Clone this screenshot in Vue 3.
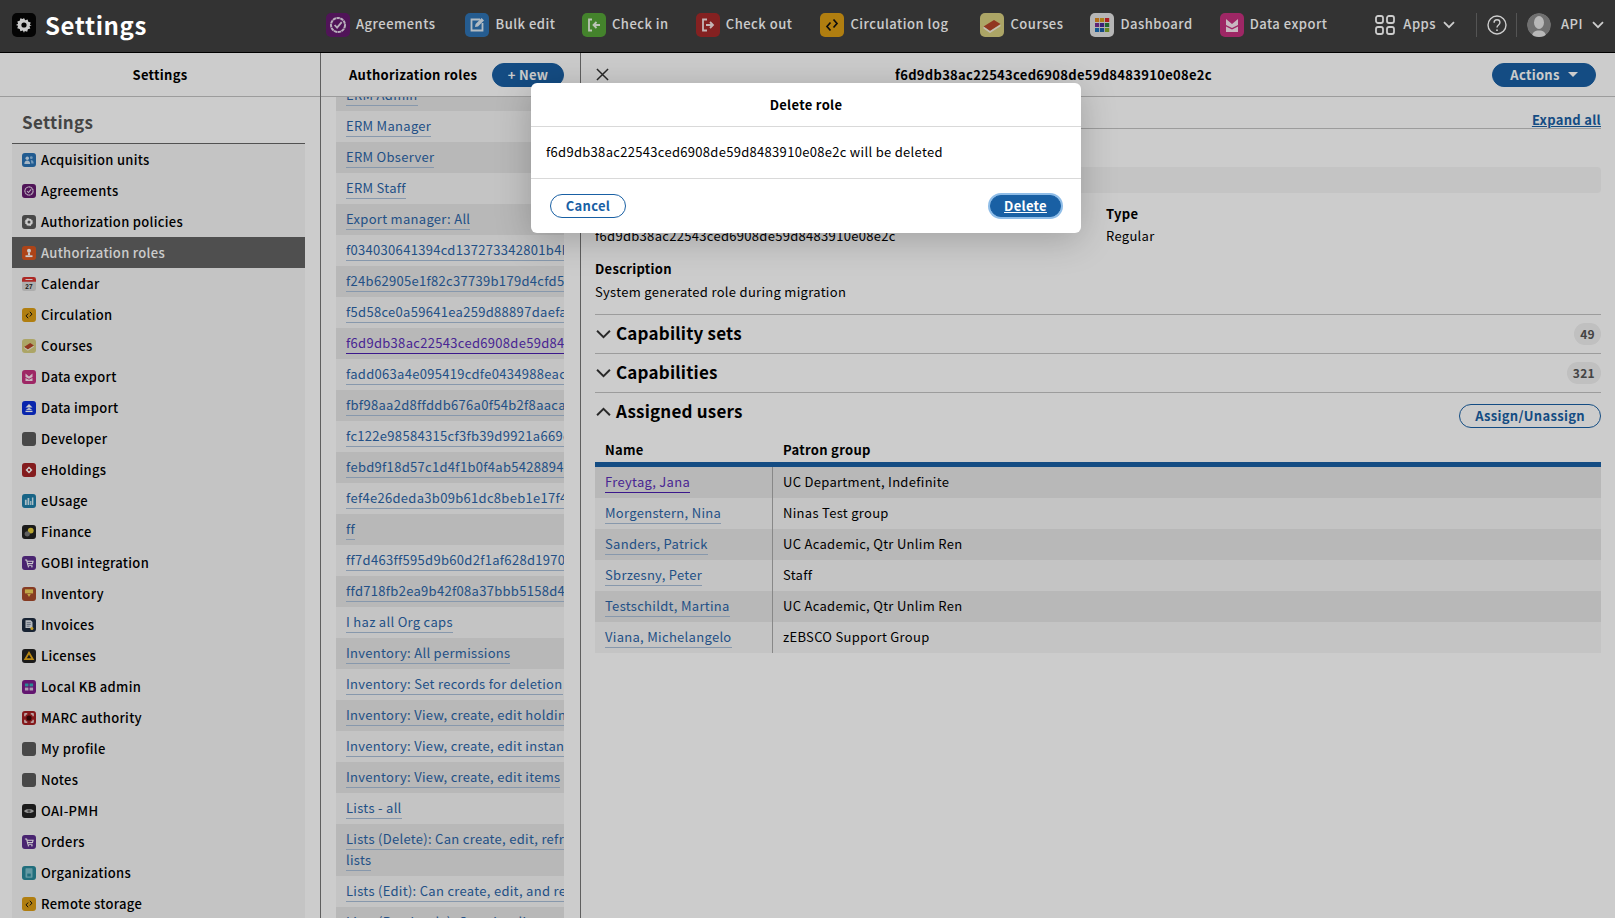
<script setup>
const g = (c) => `<path d="M12 5l1.2 2.2 2.4-.8.7 2.4 2.4.7-.8 2.4L19.7 12l-2.2 1.2.8 2.4-2.4.7-.7 2.4-2.4-.8L12 19.7l-1.2-2.2-2.4.8-.7-2.4-2.4-.7.8-2.4L3.9 12l2.2-1.2-.8-2.4 2.4-.7.7-2.4 2.4.8z" fill="${c}"/>`
const bg = (c) => `<rect width="24" height="24" rx="5" fill="${c}"/>`
const cart = `<path d="M5 7h3l2 9h8M9 9h10l-1 4H10" fill="none" stroke="#fff" stroke-width="1.8"/><circle cx="11" cy="18.5" r="1.4" fill="#fff"/><circle cx="17" cy="18.5" r="1.4" fill="#fff"/>`
const circ = `<path d="M10.500 9.500L7 13.500l3.500 4M13.500 6.500l3.500 4-3.500 4" fill="none" stroke="#111" stroke-width="1.7"/>`
const icons = {
  logo: bg('#050505') + g('#fff') + '<circle cx="12" cy="12" r="2.6" fill="#050505"/>',
  acq: bg('#2a72b5') + '<circle cx="9" cy="9" r="3" fill="#cfe3f5"/><path d="M4 19c0-4 2-6 5-6s5 2 5 6z" fill="#cfe3f5"/><circle cx="16" cy="8" r="2.4" fill="#8fbfe8"/><path d="M15 12c3 0 5 2 5 6h-4z" fill="#8fbfe8"/>',
  agreements: bg('#641a6e') + '<circle cx="12" cy="12" r="7" fill="none" stroke="#e8dcec" stroke-width="2" stroke-dasharray="3.4 .5"/><path d="M8.6 12l2.5 2.6 4.6-5.4" fill="none" stroke="#e8dcec" stroke-width="1.8"/>',
  authpol: bg('#5a5a5a') + g('#fff') + '<circle cx="12" cy="12" r="2.6" fill="#5a5a5a"/>',
  authroles: bg('#d9561f') + '<circle cx="12" cy="8" r="3.4" fill="#fff"/><path d="M10.6 11h2.8l.6 5H10z" fill="#fff"/><rect x="6" y="16" width="12" height="3" fill="#fff"/>',
  calendar: '<rect width="24" height="24" rx="4" fill="#d9d9d9"/><path d="M0 8V4a4 4 0 014-4h16a4 4 0 014 4v4z" fill="#d9342f"/><rect x="6" y="3.5" width="12" height="1.6" fill="#fff"/><text x="12" y="20" font-size="11" font-weight="700" text-anchor="middle" fill="#222" font-family="Liberation Sans, sans-serif">27</text>',
  circulation: bg('#dd9e14') + circ,
  courses: bg('#d8cf80') + '<path d="M3.500 13.500L14 7l6.500 4L10 18z" fill="#b6452a"/><path d="M3.500 13.500L10 18l10.500-6.500v1.800L10 20l-6.500-4.500z" fill="#f4eee0"/>',
  dashboard: '<rect width="24" height="24" rx="5" fill="#e4e4e4"/><rect x="5" y="5" width="4.2" height="4" fill="#e08a1e"/><rect x="10" y="5" width="4.2" height="4" fill="#d9a020"/><rect x="15" y="5" width="4.2" height="4" fill="#d8262c"/><rect x="5" y="10" width="4.2" height="4" fill="#7a2c92"/><rect x="10" y="10" width="4.2" height="4" fill="#4b2a96"/><rect x="15" y="10" width="4.2" height="4" fill="#2b7f3a"/><rect x="5" y="15" width="4.2" height="4" fill="#1b6fb8"/><rect x="10" y="15" width="4.2" height="4" fill="#1c5ea8"/><rect x="15" y="15" width="4.2" height="4" fill="#86ab2a"/>',
  dataexport: bg('#c6317f') + '<path d="M6 6l6 5 6-5v6l-6 3-6-3z" fill="#fbe6f1"/><path d="M6 13.500l6 3 6-3V19H6z" fill="#fbe6f1"/>',
  dataimport: bg('#0b2fd9') + '<path d="M12 5l6 6H6z" fill="#fff"/><path d="M12 11l6 5H6z" fill="#dfe6ff"/><rect x="6" y="17" width="12" height="2" fill="#fff"/>',
  default: bg('#5a5a5a'),
  eholdings: bg('#a62326') + '<path d="M12 6l6 6-6 6-6-6z" fill="#fff"/><circle cx="12" cy="12" r="2" fill="#a62326"/>',
  eusage: bg('#1e7ea8') + '<path d="M5 19v-9h3v9zM9.500 19V7h3v12zM14 19v-7h2v7zM17 19V6h2.500v13z" fill="#d6edf6"/>',
  finance: bg('#222') + '<circle cx="15" cy="9.500" r="5" fill="#e6cf3c"/><circle cx="9" cy="15" r="4.500" fill="#777"/>',
  cart: bg('#5c2e8c') + cart,
  inventory: bg('#a84a2c') + '<path d="M5 4h14v7H5z" fill="#f2d25a"/><path d="M9 12h6l-3 5z" fill="#f2d25a"/>',
  invoices: bg('#1f2c40') + '<path d="M6 4h9l3 3v10H6z" fill="#e4e8ee"/><path d="M8 8h7M8 11h7M8 14h5" stroke="#55637a" stroke-width="1.2"/><circle cx="17" cy="18" r="2.6" fill="#f2c230"/>',
  licenses: bg('#222') + '<path d="M12 6.500l6.500 11h-13z" fill="none" stroke="#e6a817" stroke-width="3"/>',
  localkb: bg('#7c1b8c') + '<rect x="5" y="6" width="6" height="5" fill="#34b0b8"/><rect x="13" y="6" width="6" height="5" fill="#34b0b8"/><rect x="5" y="13" width="6" height="5" fill="#d8c2e0"/><rect x="13" y="13" width="6" height="5" fill="#d8c2e0"/>',
  marc: bg('#a61f22') + '<path d="M4 4h5v2H6v3H4zM15 4h5v5h-2V6h-3zM4 15h2v3h3v2H4zM18 15h2v5h-5v-2h3z" fill="#fff"/><circle cx="12" cy="12" r="4.400" fill="#3e0808"/>',
  oai: bg('#222') + '<path d="M3.500 12c3-4.600 14-4.600 17 0-3 4.600-14 4.600-17 0z" fill="#bbb"/><circle cx="12" cy="12" r="2.800" fill="#666"/>',
  orgs: bg('#2a8a9c') + '<rect x="6" y="4" width="12" height="16" rx="1" fill="#7cc0cc"/><rect x="9" y="13" width="6" height="5" fill="#2a8a9c"/>',
  bulk: bg('#2f74b4') + '<path d="M15 6.500H6.500v11h11V10" fill="none" stroke="#dfeaf4" stroke-width="1.800"/><path d="M10 14l.6-3 6-6 2.400 2.400-6 6z" fill="#dfeaf4"/>',
  checkin: bg('#55a437') + '<path d="M10 6.500H7v11h3" fill="none" stroke="#eaf6e4" stroke-width="1.800"/><path d="M18 12h-6M14.500 9l-3 3 3 3" fill="none" stroke="#eaf6e4" stroke-width="1.800"/>',
  checkout: bg('#a52a2a') + '<path d="M11 6.500H7v11h4" fill="none" stroke="#f6e4e4" stroke-width="1.800"/><path d="M10 12h7M14 9l3 3-3 3" fill="none" stroke="#f6e4e4" stroke-width="1.800"/>',
}

const navApps = [
  { label: 'Agreements', icon: 'agreements', cls: 'a1' },
  { label: 'Bulk edit', icon: 'bulk', cls: 'a2' },
  { label: 'Check in', icon: 'checkin', cls: 'a3' },
  { label: 'Check out', icon: 'checkout', cls: 'a4' },
  { label: 'Circulation log', icon: 'circulation', cls: 'a5' },
  { label: 'Courses', icon: 'courses', cls: 'a6' },
  { label: 'Dashboard', icon: 'dashboard', cls: 'a7' },
  { label: 'Data export', icon: 'dataexport', cls: 'a8' },
]

const settings = [
  ['Acquisition units', 'acq'], ['Agreements', 'agreements'], ['Authorization policies', 'authpol'],
  ['Authorization roles', 'authroles'], ['Calendar', 'calendar'], ['Circulation', 'circulation'],
  ['Courses', 'courses'], ['Data export', 'dataexport'], ['Data import', 'dataimport'],
  ['Developer', 'default'], ['eHoldings', 'eholdings'], ['eUsage', 'eusage'], ['Finance', 'finance'],
  ['GOBI integration', 'cart'], ['Inventory', 'inventory'], ['Invoices', 'invoices'], ['Licenses', 'licenses'],
  ['Local KB admin', 'localkb'], ['MARC authority', 'marc'], ['My profile', 'default'], ['Notes', 'default'],
  ['OAI-PMH', 'oai'], ['Orders', 'cart'], ['Organizations', 'orgs'], ['Remote storage', 'circulation'],
]

const roles = [
  'ERM Admin', 'ERM Manager', 'ERM Observer', 'ERM Staff', 'Export manager: All',
  'f034030641394cd137273342801b4b2e', 'f24b62905e1f82c37739b179d4cfd5a1', 'f5d58ce0a59641ea259d88897daefa3c',
  'f6d9db38ac22543ced6908de59d8483910e08e2c', 'fadd063a4e095419cdfe0434988eac7d', 'fbf98aa2d8ffddb676a0f54b2f8aaca1',
  'fc122e98584315cf3fb39d9921a669c2', 'febd9f18d57c1d4f1b0f4ab5428894e0', 'fef4e26deda3b09b61dc8beb1e17f4a9',
  'ff', 'ff7d463ff595d9b60d2f1af628d19704', 'ffd718fb2ea9b42f08a37bbb5158d4c1', 'I haz all Org caps',
  'Inventory: All permissions', 'Inventory: Set records for deletion', 'Inventory: View, create, edit holdings',
  'Inventory: View, create, edit instances', 'Inventory: View, create, edit items', 'Lists - all',
  'Lists (Delete): Can create, edit, refresh, and delete lists', 'Lists (Edit): Can create, edit, and refresh lists',
  'Lists (Read-only): Can view lists',
]

const users = [
  ['Freytag, Jana', 'UC Department, Indefinite'],
  ['Morgenstern, Nina', 'Ninas Test group'],
  ['Sanders, Patrick', 'UC Academic, Qtr Unlim Ren'],
  ['Sbrzesny, Peter', 'Staff'],
  ['Testschildt, Martina', 'UC Academic, Qtr Unlim Ren'],
  ['Viana, Michelangelo', 'zEBSCO Support Group'],
]
const roleId = 'f6d9db38ac22543ced6908de59d8483910e08e2c'
</script>

<template>
  <div class="page">
    <header class="top">
      <div class="brand">
        <svg class="ico24" viewBox="0 0 24 24" v-html="icons.logo"></svg>
        <span class="brand-name">Settings</span>
      </div>
      <nav class="apps">
        <a v-for="app in navApps" :key="app.label" class="app" :class="app.cls">
          <svg class="ico24" viewBox="0 0 24 24" v-html="icons[app.icon]"></svg>
          <span>{{ app.label }}</span>
        </a>
      </nav>
      <div class="tools">
        <a class="app apps-menu">
          <svg class="grid-ico" viewBox="0 0 20 20">
            <rect x="1" y="1" width="7" height="7" rx="2" />
            <rect x="12" y="1" width="7" height="7" rx="2" />
            <rect x="1" y="12" width="7" height="7" rx="2" />
            <rect x="12" y="12" width="7" height="7" rx="2" />
          </svg>
          <span>Apps</span>
          <svg class="chev" viewBox="0 0 12 8"><path d="M1 1.200l5 5 5-5" /></svg>
        </a>
        <i class="vsep sep1"></i>
        <svg class="help" viewBox="0 0 24 24">
          <circle cx="12" cy="12" r="10.800" />
          <path d="M8.500 9.400c0-2.200 1.500-3.600 3.500-3.600s3.500 1.400 3.500 3.300c0 2.900-3.500 2.900-3.500 5.900" />
          <circle cx="12" cy="18.200" r="1.100" class="dot" />
        </svg>
        <i class="vsep sep2"></i>
        <svg class="avatar" viewBox="0 0 24 24">
          <circle cx="12" cy="12" r="12" fill="#8c8c8c" />
          <ellipse cx="12" cy="9.500" rx="5" ry="6.500" fill="#e6e6e6" />
          <path d="M5 24c0-5 3-6.500 7-6.500s7 1.500 7 6.500z" fill="#e6e6e6" />
        </svg>
        <span class="app api"><span>API</span></span>
        <svg class="chev" viewBox="0 0 12 8"><path d="M1 1.200l5 5 5-5" /></svg>
      </div>
    </header>

    <main class="panes">
      <section class="pane pane-settings">
        <div class="pane-head"><b>Settings</b></div>
        <div class="settings-body">
          <h2 class="settings-title">Settings</h2>
          <ul class="settings-list">
            <li v-for="s in settings" :key="s[0]" :class="{ active: s[0] === 'Authorization roles' }">
              <svg class="ico14" viewBox="0 0 24 24" v-html="icons[s[1]]"></svg>
              <span>{{ s[0] }}</span>
            </li>
          </ul>
        </div>
      </section>

      <section class="pane pane-roles">
        <div class="pane-head roles-head">
          <b>Authorization roles</b>
          <button class="btn primary new">+ New</button>
        </div>
        <div class="roles-body">
          <div class="roles-clip">
            <ul class="roles-list">
              <li v-for="r in roles" :key="r"><a class="lnk" :class="{ visited: r === roleId }">{{ r }}</a></li>
            </ul>
          </div>
        </div>
      </section>

      <section class="pane pane-detail">
        <div class="pane-head detail-head">
          <svg class="close" viewBox="0 0 14 14"><path d="M1 1l12 12M13 1L1 13" /></svg>
          <b class="detail-title">{{ roleId }}</b>
          <button class="btn primary actions">Actions <i class="caret"></i></button>
        </div>
        <div class="detail-body">
          <div class="expand-row"><a class="expand">Expand all</a></div>
          <div class="meta-title">General information</div>
          <div class="meta-bar"></div>
          <div class="kv-grid">
            <div>
              <div class="label">Name</div>
              <div class="value">{{ roleId }}</div>
            </div>
            <div>
              <div class="label">Type</div>
              <div class="value">Regular</div>
            </div>
          </div>
          <div class="kv-desc">
            <div class="label desc-label">Description</div>
            <div class="value">System generated role during migration</div>
          </div>

          <div class="acc">
            <svg class="acc-chev" viewBox="0 0 14 9"><path d="M1 1.500l6 6 6-6" /></svg>
            <h3>Capability sets</h3>
            <span class="badge">49</span>
          </div>
          <div class="acc">
            <svg class="acc-chev" viewBox="0 0 14 9"><path d="M1 1.500l6 6 6-6" /></svg>
            <h3>Capabilities</h3>
            <span class="badge">321</span>
          </div>
          <div class="acc open">
            <svg class="acc-chev" viewBox="0 0 14 9"><path d="M1 7.500l6-6 6 6" /></svg>
            <h3>Assigned users</h3>
            <button class="btn outline assign">Assign/Unassign</button>
          </div>

          <div class="tbl">
            <div class="tbl-head">
              <b class="c1">Name</b>
              <b class="c2">Patron group</b>
            </div>
            <div v-for="(u, i) in users" :key="u[0]" class="tbl-row">
              <div class="c1"><a class="lnk" :class="{ visited: i === 0 }">{{ u[0] }}</a></div>
              <div class="c2">{{ u[1] }}</div>
            </div>
          </div>
        </div>
      </section>
    </main>

    <div class="backdrop"></div>

    <div class="modal" role="dialog">
      <div class="modal-head">Delete role</div>
      <div class="modal-body">{{ roleId }} will be deleted</div>
      <div class="modal-foot">
        <button class="btn outline cancel">Cancel</button>
        <button class="btn primary del">Delete</button>
      </div>
    </div>
  </div>
</template>

<style>
html, body { margin: 0; padding: 0; overflow: hidden; }
</style>

<style scoped>
* { box-sizing: border-box; }
.page {
  position: relative;
  height: 100vh;
  display: flex;
  flex-direction: column;
  overflow: hidden;
  font-family: "Noto Sans CJK SC", "Noto Sans", sans-serif;
  font-size: 13px;
  line-height: 21px;
  letter-spacing: 0.3px;
  color: #000;
  background: #fff;
}
ul { list-style: none; margin: 0; padding: 0; }
h2, h3 { margin: 0; }
a { text-decoration: none; }

/* top bar */
.top {
  height: 53px;
  flex: none;
  display: flex;
  align-items: center;
  background: #404040;
  border-bottom: 1px solid #000;
  padding: 0 11px 2px 12px;
}
.ico24 { width: 24px; height: 24px; flex: none; display: block; }
.brand { display: flex; align-items: center; gap: 9px; width: 314px; flex: none; }
.brand-name { position: relative; z-index: 6; color: #fff; font-size: 24px; font-weight: 700; letter-spacing: 0.6px; line-height: 30px; }
.apps { display: flex; align-items: center; flex: none; }
.app {
  display: flex;
  align-items: center;
  gap: 6px;
  color: #fff;
  font-weight: 500;
  letter-spacing: 0.5px;
  white-space: nowrap;
}
.app span { padding-bottom: 3px; }
.a2 { margin-left: 30px; }
.a3 { margin-left: 26.5px; }
.a4 { margin-left: 27px; }
.a5 { margin-left: 28px; }
.a6 { margin-left: 32px; }
.a7, .a8 { margin-left: 27px; }
.tools { display: flex; align-items: center; flex: none; margin-left: auto; }
.grid-ico { width: 20px; height: 20px; margin-right: 2px; }
.grid-ico rect { fill: none; stroke: #fff; stroke-width: 1.8; }
.chev { width: 12px; height: 8px; flex: none; margin-left: 1px; }
.chev path { fill: none; stroke: #fff; stroke-width: 1.8; }
.vsep { display: block; width: 1px; height: 24px; background: #6a6a6a; }
.sep1 { margin: 0 10px 0 21px; }
.sep2 { margin: 0 10px 0 9px; }
.help { width: 20px; height: 20px; fill: none; stroke: #fff; stroke-width: 1.7; flex: none; }
.help .dot { fill: #fff; stroke: none; }
.avatar { width: 24px; height: 24px; border-radius: 50%; flex: none; }
.api { margin: 0 8px 0 10px; }

/* panes */
.panes { flex: 1; min-height: 0; display: flex; background: #fff; }
.pane { min-width: 0; display: flex; flex-direction: column; background: #fff; }
.pane-settings { width: 321px; flex: none; border-right: 1px solid #777; }
.pane-roles { width: 260px; flex: none; border-right: 1px solid #777; }
.pane-detail { flex: 1; }
.pane-head {
  height: 44px;
  flex: none;
  display: flex;
  align-items: center;
  justify-content: center;
  border-bottom: 1px solid #c4c4c4;
}
.pane-head b { font-weight: 700; white-space: nowrap; }

.settings-body { flex: 1; padding: 0 15px 0 12px; min-height: 0; overflow: hidden; display: flex; flex-direction: column; }
.settings-title {
  padding: 11px 0 8px 10px;
  font-size: 17px;
  line-height: 28px;
  font-weight: 600;
  color: #555;
  height: 47px;
  border-bottom: 1px solid #666;
  flex: none;
}
.settings-list { background: #f6f6f6; flex: 1; }
.settings-list li { height: 31px; display: flex; align-items: center; gap: 5px; padding-left: 10px; font-weight: 500; }
.settings-list li.active { background: #636363; color: #fff; }
.ico14 { width: 14px; height: 14px; flex: none; display: block; }

.roles-head { justify-content: space-between; padding: 0 16px 0 28px; }
.btn {
  font: inherit;
  font-weight: 700;
  letter-spacing: inherit;
  height: 24px;
  line-height: 20px;
  padding: 0;
  border-radius: 12px;
  cursor: pointer;
  white-space: nowrap;
}
.primary { background: #1960a4; color: #fff; border: 1px solid #1960a4; }
.outline { background: transparent; color: #1960a4; border: 1px solid #1960a4; }
.new { width: 72px; }
.roles-body { flex: 1; min-height: 0; padding: 0 16px 0 15px; display: flex; }
.roles-clip { flex: 1; min-width: 0; overflow: hidden; }
.roles-list { margin-top: -17px; width: 345px; }
.roles-list li { padding: 4px 10px 6px; }
.roles-list li:nth-child(odd) { background: #e6e6e6; }
.roles-list li:nth-child(even) { background: #f6f6f6; }
.lnk { color: #2b65a8; border-bottom: 1px solid #a9bed8; padding-bottom: 1px; }
.lnk.visited { color: #5b2fb8; border-bottom-color: #4a1fb0; }

.detail-head { position: relative; justify-content: flex-start; padding: 0 19px 0 15px; }
.close { width: 13px; height: 13px; flex: none; fill: none; stroke: #333; stroke-width: 1.6; }
.detail-title { flex: 1; text-align: center; padding-left: 6px; }
.actions { display: flex; align-items: center; justify-content: center; gap: 8px; width: 104px; flex: none; }
.caret { display: block; width: 0; height: 0; border-left: 5px solid transparent; border-right: 5px solid transparent; border-top: 5px solid #fff; }

.detail-body { flex: 1; min-height: 0; padding: 0 14px 0 14px; overflow: hidden; }
.expand-row { height: 32px; display: flex; justify-content: flex-end; align-items: flex-end; border-bottom: 1px solid #c4c4c4; }
.expand { color: #1960a4; font-weight: 700; text-decoration: underline; margin-bottom: -2px; }
.meta-title { height: 38px; font-weight: 700; font-size: 17px; line-height: 38px; padding-left: 21px; }
.meta-bar { height: 26px; background: #f6f6f6; border-radius: 4px; }
.kv-grid { display: grid; grid-template-columns: 511px 1fr; margin-top: 10px; }
.label { font-weight: 700; height: 22px; }
.value { height: 22px; }
.kv-desc { margin-top: 11px; height: 57px; border-bottom: 1px solid #c4c4c4; }
.desc-label { height: 23px; }
.acc {
  height: 39px;
  display: flex;
  align-items: center;
  gap: 5px;
  padding-left: 1px;
  border-bottom: 1px solid #c4c4c4;
}
.acc.open { border-bottom: 0; height: 37px; }
.acc-chev { width: 15px; height: 10px; fill: none; stroke: #333; stroke-width: 1.8; flex: none; }
.acc h3 { font-size: 17px; line-height: 24px; font-weight: 700; letter-spacing: 0.2px; flex: 1; margin-bottom: 2px; }
.badge {
  background: #f0f0f0;
  color: #555;
  font-weight: 700;
  font-size: 12px;
  height: 22px;
  min-width: 26px;
  line-height: 22px;
  padding: 0 6px;
  border-radius: 11px;
  text-align: center;
}
.assign { width: 142px; margin-top: 9px; }

.tbl-head { box-sizing: content-box; height: 26px; padding-top: 6px; display: grid; grid-template-columns: 177px 1fr; align-items: center; border-bottom: 5px solid #1960a4; }
.tbl-row { height: 31px; display: grid; grid-template-columns: 177px 1fr; align-items: center; }
.tbl-row:nth-child(even) { background: #e6e6e6; }
.tbl-row:nth-child(odd) { background: #f6f6f6; }
.c1 { padding-left: 10px; }
.c2 { padding-left: 11px; }
.tbl-row .c1 { padding-bottom: 2px; }
.tbl-row .c2 { border-left: 1px solid #aaa; height: 31px; line-height: 29px; padding-left: 10px; }

/* modal */
.backdrop { position: absolute; inset: 0; background: rgba(0, 0, 0, 0.2); z-index: 5; }
.modal {
  position: absolute;
  z-index: 6;
  left: 531px;
  top: 83px;
  width: 550px;
  height: 150px;
  background: #fff;
  border-radius: 6px;
  box-shadow: 0 6px 36px rgba(0, 0, 0, 0.22);
  display: flex;
  flex-direction: column;
}
.modal-head { height: 44px; flex: none; display: flex; align-items: center; justify-content: center; font-weight: 700; border-bottom: 1px solid #d9d9d9; }
.modal-body { height: 52px; flex: none; padding: 0 15px 2px; display: flex; align-items: center; border-bottom: 1px solid #d9d9d9; }
.modal-foot { flex: 1; display: flex; justify-content: space-between; align-items: center; padding: 0 20px 0 19px; }
.cancel { width: 76px; }
.del { width: 71px; text-decoration: underline; box-shadow: 0 0 0 2px #8fbde8; height: 22px; line-height: 18px; }
</style>
